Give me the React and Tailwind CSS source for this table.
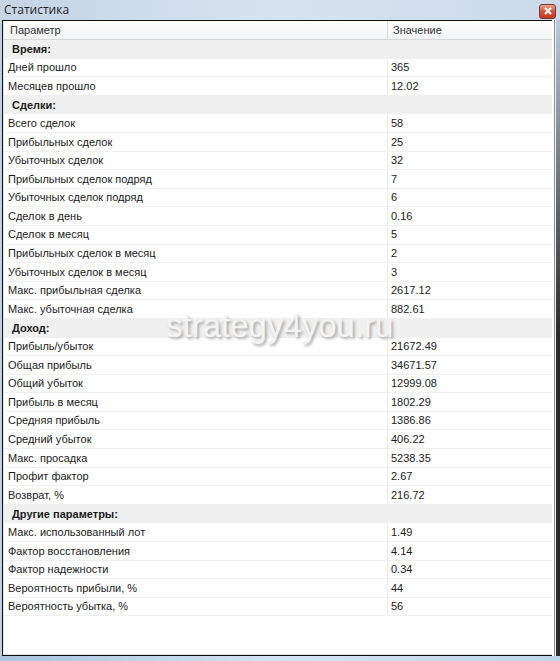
import React from "react";

const rows = [
  { section: "Время:" },
  { name: "Дней прошло", value: "365" },
  { name: "Месяцев прошло", value: "12.02" },
  { section: "Сделки:" },
  { name: "Всего сделок", value: "58" },
  { name: "Прибыльных сделок", value: "25" },
  { name: "Убыточных сделок", value: "32" },
  { name: "Прибыльных сделок подряд", value: "7" },
  { name: "Убыточных сделок подряд", value: "6" },
  { name: "Сделок в день", value: "0.16" },
  { name: "Сделок в месяц", value: "5" },
  { name: "Прибыльных сделок в месяц", value: "2" },
  { name: "Убыточных сделок в месяц", value: "3" },
  { name: "Макс. прибыльная сделка", value: "2617.12" },
  { name: "Макс. убыточная сделка", value: "882.61" },
  { section: "Доход:" },
  { name: "Прибыль/убыток", value: "21672.49" },
  { name: "Общая прибыль", value: "34671.57" },
  { name: "Общий убыток", value: "12999.08" },
  { name: "Прибыль в месяц", value: "1802.29" },
  { name: "Средняя прибыль", value: "1386.86" },
  { name: "Средний убыток", value: "406.22" },
  { name: "Макс. просадка", value: "5238.35" },
  { name: "Профит фактор", value: "2.67" },
  { name: "Возврат, %", value: "216.72" },
  { section: "Другие параметры:" },
  { name: "Макс. использованный лот", value: "1.49" },
  { name: "Фактор восстановления", value: "4.14" },
  { name: "Фактор надежности", value: "0.34" },
  { name: "Вероятность прибыли, %", value: "44" },
  { name: "Вероятность убытка, %", value: "56" },
];

export default function App() {
  return (
    <div className="w-[560px] h-[661px] flex flex-col bg-[#cfdded] font-['Liberation_Sans',Arial,sans-serif] text-[11px] text-[#1b1b1b] overflow-hidden">
      {/* Title bar */}
      <div className="h-[20px] flex items-center justify-between bg-gradient-to-r from-[#c5d5e6] via-[#d6e3f0] to-[#cbdaea] pl-[4px] pr-[4px]">
        <span className="font-['Open_Sans',sans-serif] text-[12px] text-[#1e1e1e] leading-none">Статистика</span>
        <div className="w-[17px] h-[15px] mt-[2px] rounded-[3px] border border-[#7a3a2c] bg-gradient-to-b from-[#e8a08e] via-[#d2533c] to-[#c23b22] flex items-center justify-center">
          <svg width="8" height="8" viewBox="0 0 8 8">
            <path d="M1 1 L7 7 M7 1 L1 7" stroke="#fff" strokeWidth="2" />
          </svg>
        </div>
      </div>

      {/* Window body */}
      <div className="flex-1 flex">
        <div className="w-[2px] bg-[#bcd0e4]" />
        <div className="flex-1 flex flex-col border-l border-t border-b border-[#101010]">
          <div className="flex-1 flex flex-col relative bg-white border-l border-b border-[#e4e4e4]">
            {/* Header */}
            <div className="h-[19px] flex items-center bg-gradient-to-b from-white to-[#f2f3f5] border-b border-[#d8d8d8]">
              <div className="w-[384px] pl-[6px] text-[#333] border-r border-[#dedede] h-full flex items-center">Параметр</div>
              <div className="pl-[5px] text-[#333]">Значение</div>
            </div>

            {rows.map((r, i) =>
              r.section ? (
                <div key={i} className="h-[18.6px] flex items-center bg-[#f0f0f0] pl-[8px] font-bold">
                  {r.section}
                </div>
              ) : (
                <div key={i} className="h-[18.6px] flex items-stretch border-b border-[#f0f0f0]">
                  <div className="w-[384px] pl-[4px] flex items-center border-r border-[#ececec]">{r.name}</div>
                  <div className="pl-[3px] flex items-center">{r.value}</div>
                </div>
              )
            )}

            {/* Watermark */}
            <div className="absolute left-[162px] top-[288px] text-[33px] leading-none text-[#f4f4f4] [text-shadow:2px_2px_3px_#a8a8a8] font-['Liberation_Sans',Arial,sans-serif] pointer-events-none">
              strategy4you.ru
            </div>
          </div>
        </div>
        {/* Right edge */}
        <div className="w-[2px] bg-white" />
        <div className="w-[1px] bg-[#8a8a8a]" />
        <div className="w-[1px] bg-[#f4f4f4]" />
        <div className="w-[4px] bg-gradient-to-b from-[#b9cadb] via-[#2a2a2a] to-[#2a2a2a]" />
      </div>
      <div className="h-[5px] bg-gradient-to-r from-[#a7c4e0] via-[#d4e3f1] to-[#bed4ea]" />
    </div>
  );
}
